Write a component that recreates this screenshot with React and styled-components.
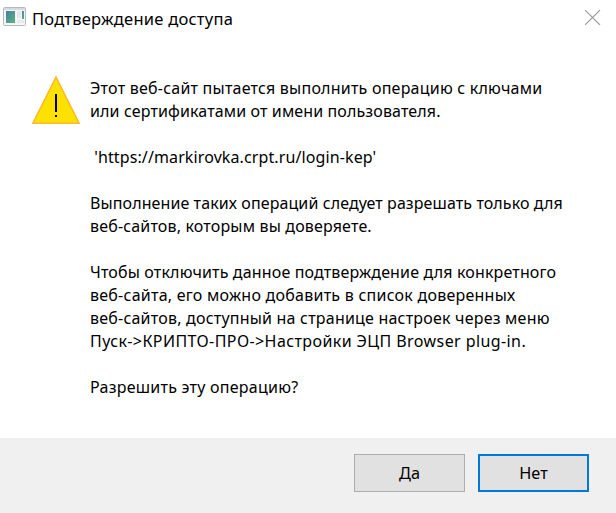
import React from "react";
import styled, { createGlobalStyle } from "styled-components";

const GlobalStyle = createGlobalStyle`
  * { box-sizing: border-box; }
  body { margin: 0; background: #fff; overflow: hidden; }
`;

const Dialog = styled.main`
  display: flex;
  flex-direction: column;
  width: 616px;
  height: 513px;
  background: #fff;
  color: #000;
  font-family: "Noto Sans", "Open Sans", sans-serif;
  font-size: 16px;
`;

const TitleBar = styled.header`
  display: flex;
  align-items: flex-start;
  height: 40px;
  padding: 7px 15px 0 3px;
`;

const Title = styled.h1`
  flex: 1;
  margin: 0 0 0 6px;
  font-size: 16.5px;
  font-weight: 400;
  line-height: 24px;
  letter-spacing: 0.25px;
`;

const CloseButton = styled.button`
  display: flex;
  margin: 3px 0 0;
  padding: 0;
  border: 0;
  background: none;
`;

const Content = styled.section`
  display: flex;
  gap: 10px;
  flex: 1;
  padding: 36px 0 0 32px;
`;

const Message = styled.div`
  display: flex;
  flex-direction: column;
  gap: 23px;
  padding-top: 1px;
`;

const Paragraph = styled.p`
  margin: 0;
  line-height: 23px;
`;

const Line = styled.span`
  display: block;
  white-space: pre;
  letter-spacing: ${(p) => p.$tracking}px;
`;

const Footer = styled.footer`
  display: flex;
  justify-content: flex-end;
  gap: 13px;
  height: 75px;
  padding: 16px 27px 0 0;
  background: #f0f0f0;
`;

const Button = styled.button`
  width: 111px;
  height: 38px;
  padding: 0;
  border: ${(p) => (p.$focused ? "2px solid #0078d7" : "1px solid #adadad")};
  background: #e1e1e1;
  color: #000;
  font: 16.3px/24px "Noto Sans", "Open Sans", sans-serif;
`;

const paragraphs = [
  [
    ["Этот веб-сайт пытается выполнить операцию с ключами", 0.225],
    ["или сертификатами от имени пользователя.", 0.125],
  ],
  [[" 'https://markirovka.crpt.ru/login-kep'", 0.11]],
  [
    ["Выполнение таких операций следует разрешать только для", 0.1],
    ["веб-сайтов, которым вы доверяете.", 0.165],
  ],
  [
    ["Чтобы отключить данное подтверждение для конкретного", 0.155],
    ["веб-сайта, его можно добавить в список доверенных", 0.243],
    ["веб-сайтов, доступный на странице настроек через меню", 0.21],
    ["Пуск->КРИПТО-ПРО->Настройки ЭЦП Browser plug-in.", 0.41],
  ],
  [["Разрешить эту операцию?", 0.25]],
];

const AppIcon = () => (
  <svg width="23" height="19" viewBox="0 0 23 19" aria-hidden="true">
    <defs>
      <linearGradient id="pane" x1="0" y1="0" x2="1" y2="1">
        <stop offset="0" stopColor="#437fa6" />
        <stop offset="1" stopColor="#5cb57c" />
      </linearGradient>
    </defs>
    <rect x="0.5" y="0.5" width="22" height="18" rx="1" fill="#f4f5f7" stroke="#b3b9c2" />
    <rect x="1" y="1" width="21" height="2" fill="#d5dae1" />
    <rect x="3" y="4" width="9" height="12" fill="url(#pane)" />
    <rect x="14" y="4" width="4" height="7" fill="#e6e8ea" />
    <rect x="19" y="4" width="2" height="8" fill="url(#pane)" />
    <rect x="14" y="13" width="7" height="3" fill="#e6e8ea" />
  </svg>
);

const WarningIcon = () => (
  <svg width="48" height="48" viewBox="0 0 48 48" aria-hidden="true">
    <path d="M24 1 L47.2 47.3 H0.8 Z" fill="#ffe100" stroke="#fdb92e" strokeWidth="1.5" />
    <rect x="23" y="18" width="2" height="18" />
    <rect x="23" y="39" width="2" height="2" />
  </svg>
);

const CloseIcon = () => (
  <svg width="16" height="15" viewBox="0 0 16 15" aria-hidden="true">
    <path d="M0 0 L15 15 M15 0 L0 15" stroke="#999" strokeWidth="1.1" />
  </svg>
);

export default function App() {
  return (
    <>
      <GlobalStyle />
      <Dialog>
        <TitleBar>
          <AppIcon />
          <Title>Подтверждение доступа</Title>
          <CloseButton aria-label="Закрыть">
            <CloseIcon />
          </CloseButton>
        </TitleBar>
        <Content>
          <WarningIcon />
          <Message>
            {paragraphs.map((lines) => (
              <Paragraph key={lines[0][0]}>
                {lines.map(([text, tracking]) => (
                  <Line key={text} $tracking={tracking}>
                    {text}
                  </Line>
                ))}
              </Paragraph>
            ))}
          </Message>
        </Content>
        <Footer>
          <Button>Да</Button>
          <Button $focused>Нет</Button>
        </Footer>
      </Dialog>
    </>
  );
}
